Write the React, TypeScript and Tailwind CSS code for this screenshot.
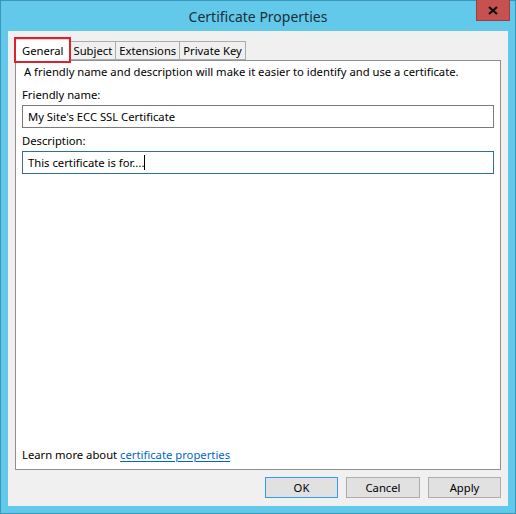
import React from "react";

const tabs = ["General", "Subject", "Extensions", "Private Key"];

export default function App() {
  return (
    <div
      className="relative w-[516px] h-[514px] bg-[#62c9ea] border border-[#3a95b8] flex flex-col text-[11.25px] leading-[15px] text-black"
      style={{ fontFamily: '"Noto Sans", "Open Sans", sans-serif' }}
    >
      {/* Title bar */}
      <div className="relative h-[30px] flex items-center justify-center">
        <span className="text-[14px] text-[#1b2f3a]">Certificate Properties</span>
        <div className="absolute right-[5px] top-[-1px] w-[34px] h-[21px] bg-[#c75050] border border-[#a03c3c] border-t-0 flex items-center justify-center">
          <svg width="10" height="9" viewBox="0 0 10 9">
            <path d="M1 1 L9 8 M9 1 L1 8" stroke="#111" strokeWidth="2.2" />
          </svg>
        </div>
      </div>

      {/* Client area */}
      <div className="mx-[7px] mb-[7px] flex-1 bg-[#f0f0f0] flex flex-col px-[7px] pt-[9px]">
        {/* Tabs */}
        <div className="flex items-end h-[20px] relative z-10">
          {tabs.map((t, i) => (
            <div
              key={t}
              className={
                i === 0
                  ? "relative h-[22px] -mb-[1px] px-[6px] bg-white border border-[#d9d9d9] border-b-0 flex items-center"
                  : "h-[19px] px-[3px] bg-[#f0f0f0] border border-[#acacac] border-l-0 flex items-center"
              }
            >
              <span className="leading-none">{t}</span>
              {i === 0 && (
                <div className="absolute left-[-2px] top-[-3px] right-[-2px] bottom-[-2px] border-2 border-[#e0202a]" />
              )}
            </div>
          ))}
        </div>

        {/* Panel */}
        <div className="flex-1 bg-white border border-[#8f8f8f] flex flex-col px-[6px] pt-[3px] pb-[7px]">
          <div className="pl-[2px]">A friendly name and description will make it easier to identify and use a certificate.</div>
          <div className="mt-[8px]">Friendly name:</div>
          <div className="mt-[3px] h-[23px] border border-[#7a7a7a] flex items-center px-[5px]">
            My Site's ECC SSL Certificate
          </div>
          <div className="mt-[5px]">Description:</div>
          <div className="mt-[3px] h-[23px] border border-[#2f6f9f] flex items-center px-[5px]">
            This certificate is for....
            <span className="inline-block w-[1px] h-[15px] bg-black" />
          </div>
          <div className="flex-1" />
          <div>
            Learn more about{" "}
            <span className="text-[#0066cc] underline underline-offset-2">certificate properties</span>
          </div>
        </div>

        {/* Buttons */}
        <div className="flex justify-end gap-[8px] pt-[7px] pb-[8px]">
          <button className="w-[73px] h-[21px] bg-[#e1e1e1] border border-[#3399ff]">OK</button>
          <button className="w-[74px] h-[21px] bg-[#e1e1e1] border border-[#adadad]">Cancel</button>
          <button className="w-[73px] h-[21px] bg-[#e1e1e1] border border-[#adadad]">Apply</button>
        </div>
      </div>
    </div>
  );
}
